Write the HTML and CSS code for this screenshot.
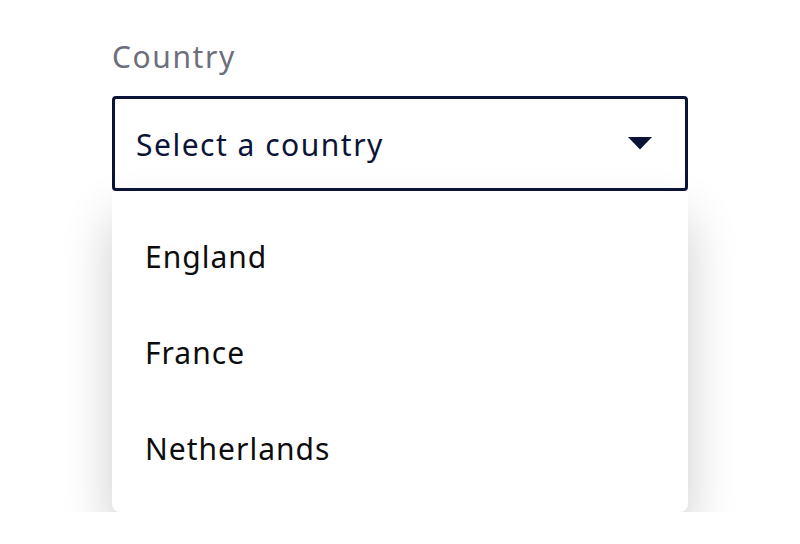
FILE: index.html
```html
<!DOCTYPE html>
<html lang="en">
<head>
<meta charset="utf-8">
<title>Country select</title>
<link rel="stylesheet" href="styles.css">
</head>
<body>
  <div class="field">
    <div class="label">Country</div>
    <div class="select">
      <span class="select-text">Select a country</span>
      <svg class="caret" width="24" height="13" viewBox="0 0 24 13" aria-hidden="true">
        <path d="M0 0 H24 L12 12.5 Z" fill="#0b1438"/>
      </svg>
    </div>
    <ul class="menu">
      <li class="option">England</li>
      <li class="option">France</li>
      <li class="option">Netherlands</li>
    </ul>
  </div>
</body>
</html>
```
FILE: styles.css
```css
html, body {
  margin: 0;
  padding: 0;
  background: #ffffff;
}
body {
  font-family: "Noto Sans", "Open Sans", sans-serif;
  padding: 37px 0 0 112px;
}
.field {
  width: 576px;
}
.label {
  font-size: 30px;
  line-height: 40px;
  color: #6c6f7c;
  letter-spacing: 1.6px;
  margin-bottom: 19px;
}
.select {
  box-sizing: border-box;
  height: 95px;
  border: 3px solid #0b1438;
  border-radius: 4px;
  display: flex;
  align-items: center;
  justify-content: space-between;
  padding: 1px 33px 0 21px;
}
.select-text {
  font-size: 30px;
  color: #0b1438;
  letter-spacing: 1.5px;
}
.caret {
  display: block;
  margin-top: -1px;
}
.menu {
  list-style: none;
  margin: 0;
  padding: 17px 0 16px;
  background: #ffffff;
  border-radius: 0 0 8px 8px;
  box-shadow: 0 26px 50px rgba(0, 0, 0, 0.2);
}
.option {
  height: 96px;
  display: flex;
  align-items: center;
  padding-left: 33px;
  font-size: 30px;
  color: #0d0d0d;
  letter-spacing: 1px;
}
```
